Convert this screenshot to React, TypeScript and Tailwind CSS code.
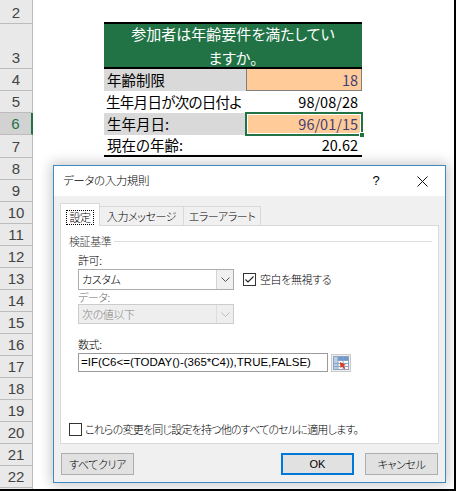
import React from "react";

type RowHead = { n: number; h: string; sel?: boolean };

const rowHeads: RowHead[] = [
  { n: 2, h: "h-[24px]" },
  { n: 3, h: "h-[45px]" },
  { n: 4, h: "h-[22px]" },
  { n: 5, h: "h-[22px]" },
  { n: 6, h: "h-[22px]", sel: true },
  { n: 7, h: "h-[23px]" },
  { n: 8, h: "h-[22px]" },
  { n: 9, h: "h-[22px]" },
  { n: 10, h: "h-[22px]" },
  { n: 11, h: "h-[22px]" },
  { n: 12, h: "h-[22px]" },
  { n: 13, h: "h-[22px]" },
  { n: 14, h: "h-[22px]" },
  { n: 15, h: "h-[22px]" },
  { n: 16, h: "h-[22px]" },
  { n: 17, h: "h-[22px]" },
  { n: 18, h: "h-[22px]" },
  { n: 19, h: "h-[22px]" },
  { n: 20, h: "h-[22px]" },
  { n: 21, h: "h-[22px]" },
  { n: 22, h: "h-[22px]" },
];

function Chevron({ color }: { color: string }) {
  return (
    <svg width="9" height="5" viewBox="0 0 9 5">
      <path d="M0.5 0.5 L4.5 4.5 L8.5 0.5" fill="none" stroke={color} strokeWidth="1" />
    </svg>
  );
}

function CheckBox({ checked }: { checked?: boolean }) {
  return (
    <div className="w-[13px] h-[13px] border border-[#333333] bg-white flex items-center justify-center shrink-0">
      {checked && (
        <svg width="11" height="11" viewBox="0 0 11 11">
          <path d="M1.5 5.5 L4 8 L9.5 2.5" fill="none" stroke="#222" strokeWidth="1.1" />
        </svg>
      )}
    </div>
  );
}

function RangeIcon() {
  return (
    <svg width="16" height="14" viewBox="0 0 16 14">
      <rect x="0.5" y="0.5" width="15" height="13" fill="#ffffff" stroke="#8aa4c2" />
      <rect x="1" y="1" width="14" height="3" fill="#6f9ad1" />
      <rect x="1" y="1" width="4" height="12" fill="#b9cde8" />
      <path d="M5 4.5 H15 M1 7.5 H15 M1 10.5 H15 M5 1 V13 M10 1 V13" stroke="#8aa4c2" strokeWidth="1" />
      <path d="M7 6 L13 9 L10.5 9.8 L12.5 12.5 L11 13 L9.3 10.5 L7.5 12 Z" fill="#d9381e" />
    </svg>
  );
}

export default function App() {
  const cjk = "font-['Noto_Sans_CJK_JP',sans-serif]";
  const ui = "font-['Noto_Sans_CJK_JP',sans-serif] [font-feature-settings:'palt'] tracking-[-0.4px] font-light";

  return (
    <div className="w-[456px] h-[491px] overflow-hidden bg-white border-r-2 border-b-2 border-black relative">
      <div className="flex h-full">
        {/* row headers */}
        <div className="w-[33px] shrink-0 flex flex-col bg-[#e9e9e9] font-['Liberation_Sans',sans-serif] text-[15px] text-[#444444]">
          {rowHeads.map((r) => (
            <div
              key={r.n}
              className={`${r.h} shrink-0 flex items-end justify-center border-b border-[#bcbcbc] ${
                r.sel
                  ? "bg-[#d2d2d2] text-[#217346] border-r-2 border-r-[#217346]"
                  : "border-r border-r-[#bcbcbc]"
              }`}
            >
              <span className="h-[21px] leading-[21px]">{r.n}</span>
            </div>
          ))}
          <div className="flex-1 border-r border-[#bcbcbc]" />
        </div>

        {/* sheet area */}
        <div className={`flex-1 ${cjk}`}>
          <div className="ml-[71px] mt-[22px] w-[258px] flex flex-col text-[14.5px] [font-feature-settings:'palt']">
            <div className="h-[47px] border-y-2 border-black bg-[#217346] text-white text-[15px] leading-[24px] text-center flex flex-col justify-center">
              <span>参加者は年齢要件を満たしてい</span>
              <span>ますか。</span>
            </div>

            <div className="flex h-[22px]">
              <div className="w-[142px] bg-[#d9d9d9] pl-[3px] leading-[22px] whitespace-nowrap overflow-hidden">年齢制限</div>
              <div className="w-[116px] bg-[#ffcc99] border-x border-b border-[#7f7f7f] pr-[3px] text-right leading-[21px] text-[#3f3f76]">
                18
              </div>
            </div>

            <div className="flex h-[22px]">
              <div className="w-[142px] pl-[2px] leading-[22px] whitespace-nowrap tracking-[-0.7px]">生年月日が次の日付よ</div>
              <div className="w-[116px] pr-[4px] text-right leading-[22px]">98/08/28</div>
            </div>

            <div className="flex h-[22px]">
              <div className="w-[142px] bg-[#d9d9d9] pl-[3px] leading-[22px] whitespace-nowrap overflow-hidden">生年月日:</div>
              <div className="w-[116px] bg-[#ffcc99] pr-[4px] text-right leading-[22px] text-[#3f3f76] relative">
                96/01/15
                <div className="absolute -left-[1px] -top-[1px] -right-[1px] -bottom-[1px] border-2 border-[#217346] shadow-[inset_0_0_0_1px_#ffffff]" />
                <div className="absolute -right-[3px] -bottom-[3px] w-[6px] h-[6px] bg-[#217346] border border-white" />
              </div>
            </div>

            <div className="flex h-[22px] border-b-2 border-black">
              <div className="w-[142px] pl-[3px] leading-[20px] whitespace-nowrap overflow-hidden">現在の年齢:</div>
              <div className="w-[116px] pr-[4px] text-right leading-[20px]">20.62</div>
            </div>
          </div>
        </div>
      </div>

      {/* data validation dialog */}
      <div
        className={`absolute left-[53px] top-[165px] w-[393px] h-[318px] border border-[#3d8ac2] bg-[#f0f0f0] flex flex-col shadow-[0_0_12px_2px_rgba(0,0,0,0.22)] text-[11px] text-black ${ui}`}
      >
        <div className="h-[30px] bg-white flex items-center justify-between shrink-0">
          <span className="pl-[9px] text-[11.5px]">データの入力規則</span>
          <div className="flex h-full">
            <div className="w-[46px] flex items-center justify-center font-['Liberation_Sans',sans-serif] font-normal text-[13px]">?</div>
            <div className="w-[46px] flex items-center justify-center">
              <svg width="11" height="11" viewBox="0 0 11 11">
                <path d="M0.5 0.5 L10.5 10.5 M10.5 0.5 L0.5 10.5" stroke="#111" strokeWidth="1" />
              </svg>
            </div>
          </div>
        </div>

        <div className="flex-1 px-[6px] pt-[7px] flex flex-col">
          {/* tabs */}
          <div className="flex items-end h-[22px]">
            <div className="relative z-10 -mb-px h-[23px] w-[40px] bg-white border border-b-0 border-[#d9d9d9] flex items-end justify-center pb-[1px]">
              <span className="border border-dotted border-black px-[2px] h-[15px] leading-[13px]">設定</span>
            </div>
            <div className="h-[19px] w-[84px] border border-l-0 border-b-0 border-[#d9d9d9] flex items-center justify-center leading-[18px]">
              入力メッセージ
            </div>
            <div className="h-[19px] w-[77px] border border-l-0 border-b-0 border-[#d9d9d9] flex items-center justify-center leading-[18px]">
              エラーアラート
            </div>
          </div>

          {/* settings panel */}
          <div className="h-[219px] bg-white border border-[#d9d9d9] flex flex-col">
            <div className="mt-[7px] ml-[8px] mr-[6px] flex items-center h-[16px]">
              <span className="text-[#333333] leading-[16px]">検証基準</span>
              <div className="flex-1 h-px bg-[#dcdcdc] ml-[3px]" />
            </div>

            <div className="mt-[3px] ml-[17px] h-[16px] leading-[16px]">許可:</div>

            <div className="mt-px ml-[17px] flex items-center h-[21px]">
              <div className="w-[156px] h-[21px] border border-[#acacac] bg-white flex">
                <div className="flex-1 pl-[3px] leading-[19px]">カスタム</div>
                <div className="w-[17px] border-l border-[#d4d4d4] bg-[#f0f0f0] flex items-center justify-center">
                  <Chevron color="#555555" />
                </div>
              </div>
              <div className="ml-[9px] flex items-center">
                <CheckBox checked />
                <span className="ml-[4px]">空白を無視する</span>
              </div>
            </div>

            <div className="ml-[17px] h-[12px] leading-[12px] mt-px text-[#6d6d6d]">データ:</div>

            <div className="mt-px ml-[17px] w-[156px] h-[20px] border border-[#cccccc] bg-[#eeeeee] flex">
              <div className="flex-1 pl-[3px] leading-[18px] text-[#838383]">次の値以下</div>
              <div className="w-[17px] border-l border-[#dddddd] flex items-center justify-center">
                <Chevron color="#bcbcbc" />
              </div>
            </div>

            <div className="mt-[12px] ml-[17px] h-[16px] leading-[16px]">数式:</div>

            <div className="mt-px ml-[17px] flex items-center">
              <div className="w-[250px] h-[19px] border border-[#9b9b9b] bg-white pl-[2px] leading-[17px] font-['Liberation_Sans',sans-serif] font-normal tracking-normal text-[11.5px] whitespace-nowrap overflow-hidden">
                =IF(C6&lt;=(TODAY()-(365*C4)),TRUE,FALSE)
              </div>
              <div className="ml-[3px] w-[20px] h-[18px] border border-[#cccccc] bg-[#eeeeee] flex items-center justify-center">
                <RangeIcon />
              </div>
            </div>

            <div className="mt-[51px] ml-[8px] flex items-center h-[13px]">
              <CheckBox />
              <span className="ml-[3px] whitespace-nowrap tracking-[-0.8px]">これらの変更を同じ設定を持つ他のすべてのセルに適用します。</span>
            </div>
          </div>

          {/* buttons */}
          <div className="mt-[9px] flex h-[22px]">
            <div className="w-[73px] h-[22px] ml-px bg-[#e1e1e1] border border-[#adadad] flex items-center justify-center">
              すべてクリア
            </div>
            <div className="flex-1" />
            <div className="w-[73px] h-[22px] bg-[#e1e1e1] border-2 border-[#0078d7] flex items-center justify-center font-['Liberation_Sans',sans-serif] font-normal tracking-normal">
              OK
            </div>
            <div className="w-[73px] h-[22px] ml-[11px] mr-px bg-[#e1e1e1] border border-[#adadad] flex items-center justify-center">
              キャンセル
            </div>
          </div>
        </div>
      </div>
    </div>
  );
}
